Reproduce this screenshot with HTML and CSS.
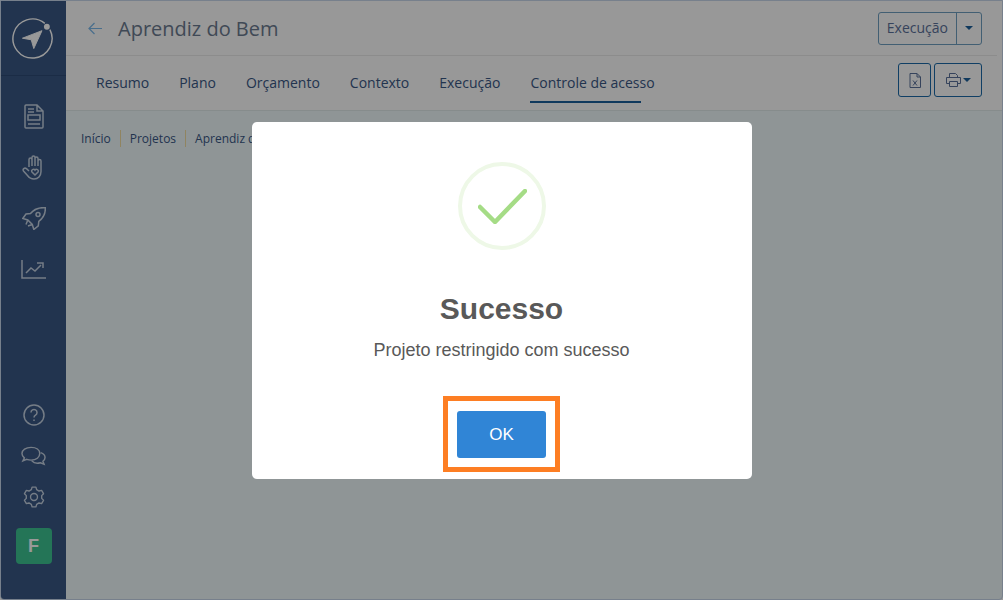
FILE: index.html
```html
<!DOCTYPE html>
<html lang="en">
<head>
    <meta charset="UTF-8">
    <title>Aprendiz do Bem</title>
    <link rel="stylesheet" href="styles.css">
</head>
<body>
    <div class="app">
        <aside class="sidebar">
            <div class="logo">
                <svg width="43" height="43" viewBox="0 0 44 44" fill="none">
                    <path d="M34.6 6.5A20 20 0 1 0 39.8 12.9" stroke="#fff" stroke-width="1.5"/>
                    <circle cx="36.7" cy="10" r="3" fill="#fff"/>
                    <path d="M11.7 21.700 31.700 14 23.300 32.300 20.700 23.300z" fill="#fff" stroke="#fff" stroke-linejoin="round"/>
                </svg>
            </div>
            <nav class="side-nav">
                <svg class="side-icon" width="20" height="25" viewBox="0 0 20 25"><path d="M2 1h11l6 6v16a1 1 0 0 1-1 1H2a1 1 0 0 1-1-1V2a1 1 0 0 1 1-1zM13 1v6h6M4 5h6M4 8h6M4 11h12v5H4zM4 20h12"/></svg>
                <svg class="side-icon" width="23" height="25" viewBox="0 0 23 25"><path d="M7 12V4.500a1.500 1.500 0 0 1 3 0V2.500a1.500 1.500 0 0 1 3 0V3.500a1.500 1.500 0 0 1 3 0V6a1.500 1.500 0 0 1 3 0v10.500c0 4.500-3 7.500-7 7.500-3 0-5-1.500-6.500-3.500L1.500 16c-1.200-1.800 1-3.800 3-2.300L7 16M10 4v7M13 3v8M16 3.500V11M13 20l-3-3a1.700 1.700 0 0 1 3-1.900 1.700 1.700 0 0 1 3 1.900z"/></svg>
                <svg class="side-icon" width="24" height="23" viewBox="0 0 24 23"><path d="M23.300.700C17 .300 12 2 8.500 6.500L4 7 .8 11.500l5 1.500 4.500 4.500 1.500 5 4.500-3.700.5-4.500c4.800-3.500 6.800-8 6.500-13.600zM5.800 13 4 17.500M10.300 17.500 6 19"/><circle cx="16" cy="7.500" r="2"/></svg>
                <svg class="side-icon" width="25" height="19" viewBox="0 0 25 19"><path d="M1 0v18h24M5 13l5-5 4 3 6-6M16 3h6v5"/></svg>
            </nav>
            <div class="side-bottom">
                <svg class="side-icon" width="22" height="22" viewBox="0 0 22 22"><circle cx="11" cy="11" r="10"/><path d="M8 8.500a3 3 0 1 1 4.500 2.600c-1 .6-1.500 1.200-1.500 2.400M11 15.500v1.500"/></svg>
                <svg class="side-icon" width="25" height="20" viewBox="0 0 26 20"><path d="M10.500 1C5 1 1 4 1 7.500c0 1.800 1 3.300 2.500 4.500L2 15l4-1.500c1.400.5 3 .8 4.500.8 5.500 0 9-3 9-6.800S16 1 10.500 1zM20.500 6.500c3 1 4.500 3 4.500 5 0 1.600-1 3-2.200 4l1.200 3-3.800-1.500c-3.500 1-7.200 0-9-2"/></svg>
                <svg class="side-icon" width="22" height="22" viewBox="0 0 24 24"><path d="M9.900 1.200h4.200L14.900 4l2.600 1.500 2.800-.7 2.100 3.600-2 2.100v3l2 2.100-2.100 3.600-2.800-.7-2.600 1.500-.8 2.800H9.900L9.100 20l-2.600-1.500-2.800.7-2.100-3.600 2-2.100v-3l-2-2.100 2.100-3.600 2.800.7L9.100 4z" stroke-linejoin="round"/><circle cx="12" cy="12" r="3.800"/></svg>
                <div class="avatar">F</div>
            </div>
        </aside>

        <main class="main">
            <header class="page-head">
                <div class="title-row">
                    <svg class="back" width="14" height="13" viewBox="0 0 14 13"><path d="M14 6.500H1M6.500 1 1 6.500 6.500 12"/></svg>
                    <h1>Aprendiz do Bem</h1>
                    <div class="split-btn">
                        <span class="split-label">Execução</span>
                        <span class="split-caret"><i class="caret"></i></span>
                    </div>
                </div>
                <div class="tab-row">
                    <ul class="tabs">
                        <li>Resumo</li>
                        <li>Plano</li>
                        <li>Orçamento</li>
                        <li>Contexto</li>
                        <li>Execução</li>
                        <li class="active">Controle de acesso</li>
                    </ul>
                    <div class="tools">
                        <button class="tool-btn excel">
                            <svg width="12" height="15" viewBox="0 0 12 15" fill="none"><path d="M1 .5h7l3.500 3.500v10.500H1zM8 .5V4h3.500M4 7.500l4 5M8 7.500l-4 5"/></svg>
                        </button>
                        <button class="tool-btn print">
                            <svg width="15" height="14" viewBox="0 0 15 14" fill="none"><path d="M3.500 4.500V.5h6l2 2v2M3.500 10.500h-3v-6h14v6h-3M3.500 8.500h8v5h-8z"/></svg>
                            <i class="caret"></i>
                        </button>
                    </div>
                </div>
            </header>
            <div class="breadcrumb">
                <span>Início</span>
                <span>Projetos</span>
                <span>Aprendiz do Bem</span>
            </div>
        </main>
    </div>

    <div class="overlay">
        <div class="modal">
            <div class="success-icon">
                <svg width="49" height="35" viewBox="0 0 49 35" fill="none"><path d="M2 18 17 33 47 2"/></svg>
            </div>
            <h2>Sucesso</h2>
            <p>Projeto restringido com sucesso</p>
            <div class="callout">
                <button class="ok-btn">OK</button>
            </div>
        </div>
    </div>
</body>
</html>
```

FILE: styles.css
```css
* {
    box-sizing: border-box;
}
html, body {
    height: 100%;
}
body {
    margin: 0;
    font-family: "Open Sans", sans-serif;
    color: #395784;
    background: #fff;
    overflow: hidden;
}
.app {
    display: flex;
    height: 100vh;
    background: #eef8fb;
    border: 1px solid #c6d6ea;
    border-radius: 0 0 4px 4px;
    overflow: hidden;
}
.sidebar {
    width: 65px;
    flex-shrink: 0;
    display: flex;
    flex-direction: column;
    background: #395784;
}
.logo {
    height: 75px;
    display: flex;
    align-items: center;
    padding-left: 10px;
    border-bottom: 1px solid #2d4a75;
}
.side-nav {
    display: grid;
    grid-auto-rows: 51px;
    justify-items: center;
    align-items: center;
    padding-top: 15px;
}
.side-bottom {
    margin-top: auto;
    display: flex;
    flex-direction: column;
    align-items: center;
    gap: 20px;
    padding-bottom: 35px;
}
.side-icon {
    fill: none;
    stroke: #c4d0e0;
    stroke-width: 1.5;
}
.avatar {
    width: 36px;
    height: 36px;
    border-radius: 4px;
    background: #3cc492;
    color: #fff;
    font-family: "Liberation Sans", sans-serif;
    font-size: 18px;
    font-weight: bold;
    line-height: 36px;
    text-align: center;
}
.main {
    flex: 1;
    min-width: 0;
}
.page-head {
    background: #fdfdfd;
    border-bottom: 1px solid #dfe9ea;
    height: 110px;
}
.title-row {
    height: 55px;
    display: flex;
    align-items: center;
    padding: 0 15px 0 22px;
    margin-right: 5px;
    border-bottom: 1px solid #eaeaea;
}
.back {
    fill: none;
    stroke: #7ab8ea;
    stroke-width: 1.2;
}
h1 {
    margin: 0 0 0 16px;
    font-size: 20px;
    font-weight: 400;
    color: #6b7a8f;
}
.split-btn {
    margin-left: auto;
    display: flex;
    height: 33px;
    border: 1px solid #6f9fc0;
    border-radius: 3px;
    color: #395784;
    font-size: 14px;
    line-height: 30px;
}
.split-label {
    padding: 0 8px;
    color: #5a7099;
}
.split-caret {
    width: 25px;
    border-left: 1px solid #6f9fc0;
    display: flex;
    align-items: center;
    justify-content: center;
}
.caret {
    display: inline-block;
    border-top: 4px solid #1c5f9c;
    border-left: 4px solid transparent;
    border-right: 4px solid transparent;
}
.tab-row {
    height: 54px;
    display: flex;
    justify-content: space-between;
    align-items: center;
    padding: 0 20px 0 30px;
}
.tabs {
    list-style: none;
    margin: 0;
    padding: 0;
    display: flex;
    gap: 30px;
    height: 100%;
    font-size: 14px;
    line-height: 54px;
}
.tabs li {
    height: 47px;
}
.tabs .active {
    background: linear-gradient(#1c5f9c, #1c5f9c) no-repeat left bottom / 111px 2px;
}
.tools {
    display: flex;
    gap: 3px;
    margin-top: -6px;
}
.tool-btn {
    height: 34px;
    padding: 0;
    background: none;
    border: 1px solid #1c6aa8;
    border-radius: 3px;
    display: flex;
    align-items: center;
    justify-content: center;
    gap: 2px;
}
.tool-btn svg {
    stroke: #5a7099;
}
.excel {
    width: 33px;
}
.print {
    width: 48px;
}
.breadcrumb {
    display: flex;
    padding: 19px 15px 0;
    font-size: 12px;
    line-height: 17px;
}
.breadcrumb span {
    padding: 0 9px;
    border-left: 1px solid #f0dca0;
}
.breadcrumb span:first-child {
    padding-left: 0;
    border-left: 0;
}
.overlay {
    position: fixed;
    inset: 0;
    display: flex;
    align-items: center;
    justify-content: center;
    background: rgba(0,0,0,0.4);
}
.modal {
    width: 500px;
    height: 357px;
    background: #fff;
    border-radius: 5px;
    padding-top: 40px;
    display: flex;
    flex-direction: column;
    align-items: center;
    font-family: "Liberation Sans", sans-serif;
    color: #595959;
}
.success-icon {
    width: 88px;
    height: 88px;
    border: 4px solid #eef8e7;
    border-radius: 50%;
    display: flex;
    align-items: center;
    justify-content: center;
}
.success-icon svg {
    stroke: #a5dc86;
    stroke-width: 4.5;
    stroke-linecap: round;
    stroke-linejoin: round;
    margin: 2px 0 0 1px;
}
h2 {
    margin: 41px 0 0;
    font-size: 30px;
    line-height: 36px;
    font-weight: bold;
}
.modal p {
    margin: 11px 0 0;
    font-size: 18px;
    line-height: 24px;
}
.callout {
    margin-top: 34px;
    padding: 10px 9px 9px;
    border: 5px solid #fd7e23;
}
.ok-btn {
    display: block;
    width: 89px;
    height: 47px;
    padding: 1px 0 0;
    border: 0;
    border-radius: 3px;
    background: #3085d6;
    color: #fff;
    font-family: "Liberation Sans", sans-serif;
    font-size: 17px;
}
```
